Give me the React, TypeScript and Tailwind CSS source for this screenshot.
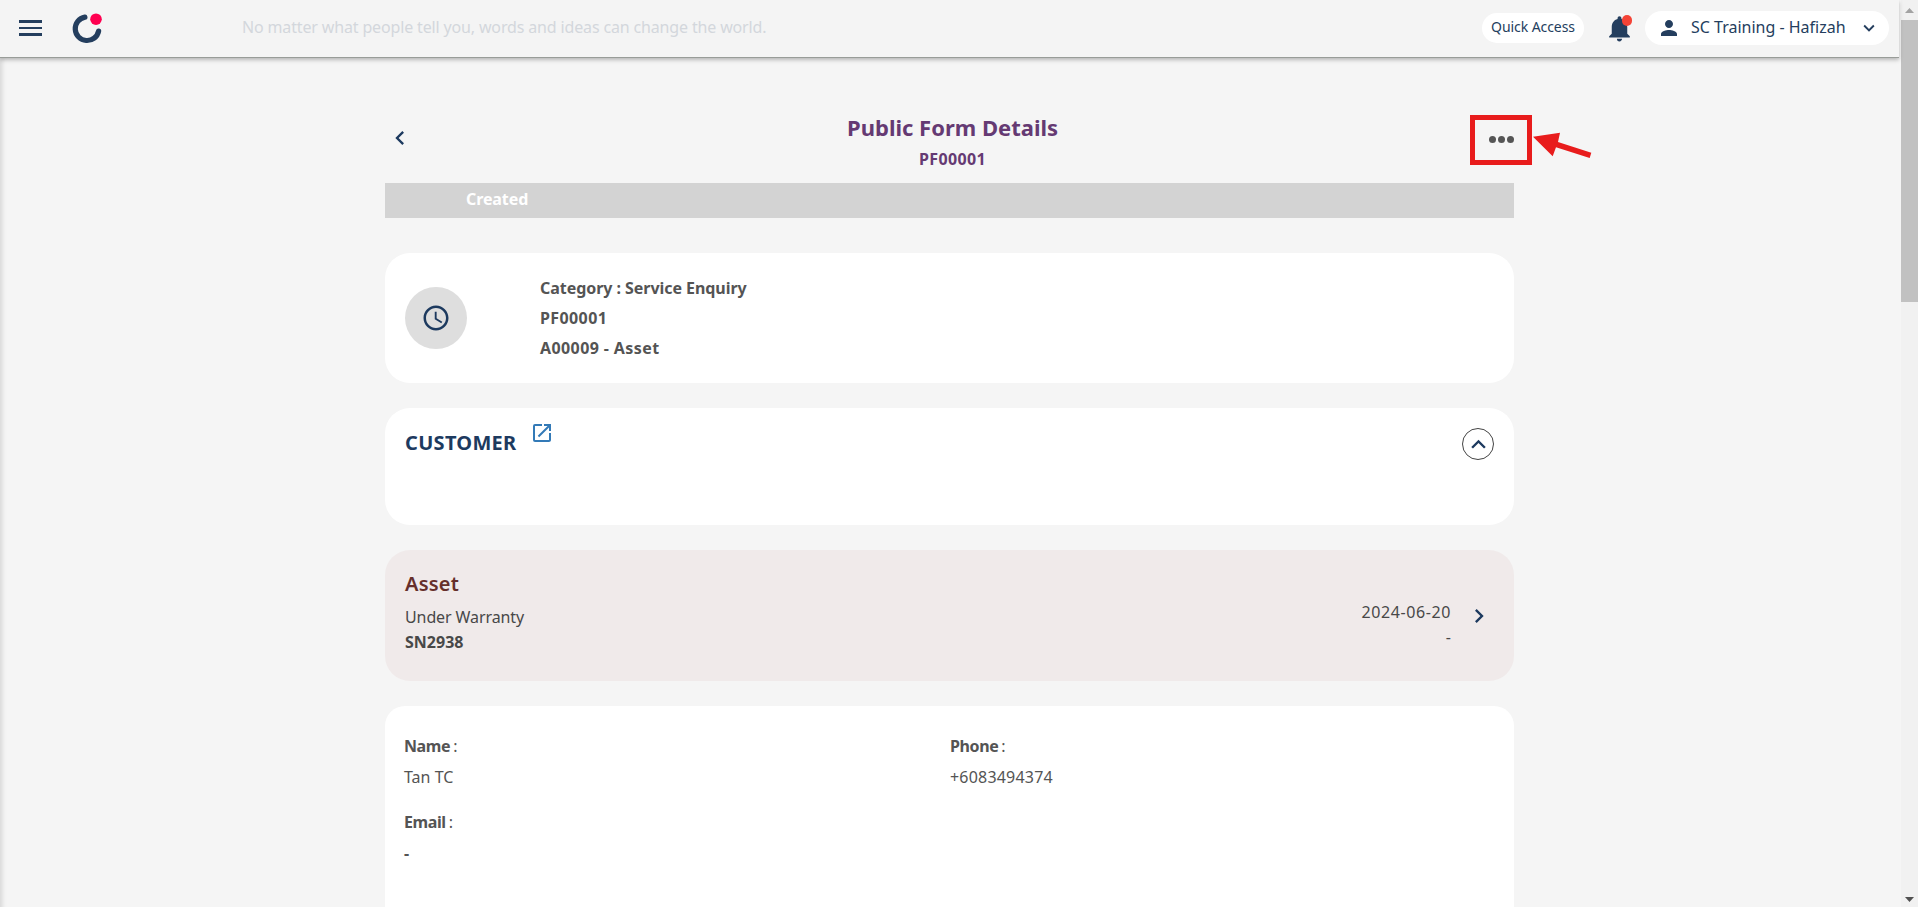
import type { ReactNode } from "react";
import {
  MdAccessTime,
  MdChevronLeft,
  MdChevronRight,
  MdExpandLess,
  MdExpandMore,
  MdNotifications,
  MdOpenInNew,
  MdPerson,
} from "react-icons/md";

function Logo() {
  return (
    <svg className="ml-[29px] h-8 w-8 shrink-0" viewBox="0 0 32 32" fill="none">
      <path d="M13.9 4.1 A11.8 11.8 0 1 0 27.6 18.1" stroke="#243e5e" strokeWidth="5.2" strokeLinecap="round" />
      <circle cx="25" cy="6.2" r="5.8" fill="#ff0050" />
    </svg>
  );
}

function Header() {
  return (
    <header className="relative z-10 flex h-[58px] w-[1899px] shrink-0 items-center border-b border-[#989c98] bg-[#f4f4f4] pr-[10px] pl-[19px] text-[#243e5e] shadow-[0_2px_4px_rgba(0,0,0,0.25)]">
      <button className="mb-px flex w-[23px] shrink-0 flex-col gap-[4px]">
        <span className="h-[2.4px] bg-[#243e5e]" />
        <span className="h-[2.4px] bg-[#243e5e]" />
        <span className="h-[2.4px] bg-[#243e5e]" />
      </button>
      <Logo />
      <p className="mb-[4px] ml-[139px] flex-1 text-[16px] leading-6 tracking-[-0.15px] text-[#d3d7dc]">
        No matter what people tell you, words and ideas can change the world.
      </p>
      <button className="mb-px flex h-[30px] w-[102px] justify-center rounded-full bg-white text-[14px] leading-[27px] tracking-[-0.08px]">
        Quick Access
      </button>
      <div className="relative ml-[20px] flex h-[31px] w-[31px]">
        <MdNotifications size={31} />
        <span className="absolute top-[2px] right-[3px] h-[10.5px] w-[10.5px] rounded-full bg-[#f44336]" />
      </div>
      <button className="mb-px ml-[10px] flex h-[34px] w-[244px] items-center rounded-full bg-white pl-[12px]">
        <MdPerson size={24} />
        <span className="mb-[2px] ml-[10px] w-[160px] text-left text-[16px] leading-6">SC Training - Hafizah</span>
        <MdExpandMore size={22} className="ml-[7px]" />
      </button>
    </header>
  );
}

function Scrollbar() {
  return (
    <div className="flex w-[17px] shrink-0 flex-col items-center bg-[#f1f1f1]">
      <svg className="h-[20px] w-[17px] shrink-0" viewBox="0 0 17 20">
        <path d="M4 13 L8.5 8 L13 13 Z" fill="#a3a3a3" />
      </svg>
      <div className="h-[282px] w-full bg-[#c1c1c1]" />
      <svg className="mt-auto h-[17px] w-[17px]" viewBox="0 0 17 17">
        <path d="M4 7 L8.5 12 L13 7 Z" fill="#505050" />
      </svg>
    </div>
  );
}

function Callout() {
  return (
    <>
      <div className="absolute top-[57px] left-[1085px] h-[50px] w-[62px] border-5 border-[#e81c1c]" />
      <svg className="absolute top-[72px] left-[1147px] h-[30px] w-[62px]" viewBox="0 0 62 30" fill="#e81c1c">
        <path d="M1 6.7 L28 2.7 L26 12 L59.3 22.8 L57.7 28 L24 17.2 L20.7 26.2 Z" />
      </svg>
    </>
  );
}

function Field({ label, children }: { label: string; children: ReactNode }) {
  return (
    <div className="text-[16px] leading-[31px]">
      <div>
        <b className="tracking-[-0.4px]">{label}</b>
        <span className="ml-[3px]">:</span>
      </div>
      <div>{children}</div>
    </div>
  );
}

export default function App() {
  return (
    <div className="flex h-[907px] w-[1918px] overflow-hidden bg-[#f5f5f5] font-['Noto_Sans',sans-serif] text-[#545454]">
      <div className="flex w-[1901px] shrink-0 flex-col">
        <Header />
        <main className="flex-1 pl-[385px] shadow-[inset_5px_0_5px_-3px_rgba(0,0,0,0.13)]">
          <div className="relative flex h-[125px] w-[1129px] items-start">
            <MdChevronLeft size={28} className="mt-[66px] ml-px w-[28px] text-[#1d3a5f]" />
            <div className="flex-1 pt-[55px] pl-[2px] text-center font-bold text-[#653a73]">
              <h1 className="text-[22px] leading-[28px]">Public Form Details</h1>
              <p className="mt-[6px] text-[16px] leading-[24px] tracking-[0.35px]">PF00001</p>
            </div>
            <div className="mt-[78px] flex gap-[1.5px]">
              <span className="h-[7.3px] w-[7.3px] rounded-full bg-[#555]" />
              <span className="h-[7.3px] w-[7.3px] rounded-full bg-[#555]" />
              <span className="h-[7.3px] w-[7.3px] rounded-full bg-[#555]" />
            </div>
            <Callout />
          </div>

          <div className="h-[35px] w-[1129px] bg-[#d3d3d3] pl-[81px] text-[16px] leading-[33px] font-bold tracking-[-0.1px] text-white">
            Created
          </div>

          <section className="mt-[35px] flex h-[130px] w-[1129px] items-center rounded-[25px] bg-white pl-[20px]">
            <div className="flex h-[62px] w-[62px] items-center justify-center rounded-full bg-[#dedede] text-[#1d3a5f]">
              <MdAccessTime size={30} />
            </div>
            <div className="ml-[73px] text-[16px] leading-[30px] font-bold">
              <p className="tracking-[-0.05px]">Category : Service Enquiry</p>
              <p className="tracking-[0.4px]">PF00001</p>
              <p className="tracking-[0.4px]">A00009 - Asset</p>
            </div>
          </section>

          <section className="mt-[25px] flex h-[117px] w-[1129px] items-start rounded-[25px] bg-white pr-[20px] pl-[20px] text-[#1d3a5f]">
            <h2 className="mt-[21px] w-[125px] text-[20px] leading-[28px] font-bold tracking-[0.3px]">CUSTOMER</h2>
            <MdOpenInNew size={24} className="mt-[13px] text-[#337ab7]" />
            <button className="mt-[20px] ml-auto flex h-[32px] w-[32px] items-center justify-center rounded-full border border-[#444]">
              <MdExpandLess size={29} className="shrink-0" />
            </button>
          </section>

          <section className="mt-[25px] flex h-[131px] w-[1129px] justify-between rounded-[25px] bg-[#f0eaea] pl-[20px] text-[#484848]">
            <div className="pt-[20px] text-[16px] leading-[25px]">
              <h2 className="text-[20px] leading-[28px] font-semibold tracking-[0.2px] text-[#662f2b]">Asset</h2>
              <p className="mt-[7px] tracking-[-0.1px]">Under Warranty</p>
              <p className="font-bold">SN2938</p>
            </div>
            <div className="flex pr-[21px]">
              <div className="pt-[50px] text-right text-[16px] leading-[25px]">
                <p className="tracking-[0.6px]">2024-06-20</p>
                <p>-</p>
              </div>
              <MdChevronRight size={28} className="mt-[52px] ml-[14px] text-[#1d3a5f]" />
            </div>
          </section>

          <section className="mt-[25px] grid h-[260px] w-[1129px] grid-cols-[546px_1fr] content-start gap-y-[14px] rounded-[20px] bg-white pt-[25px] pl-[19px]">
            <Field label="Name">Tan TC</Field>
            <Field label="Phone">
              <span className="tracking-[0.2px]">+6083494374</span>
            </Field>
            <Field label="Email">
              <b>-</b>
            </Field>
          </section>
        </main>
      </div>
      <Scrollbar />
    </div>
  );
}
